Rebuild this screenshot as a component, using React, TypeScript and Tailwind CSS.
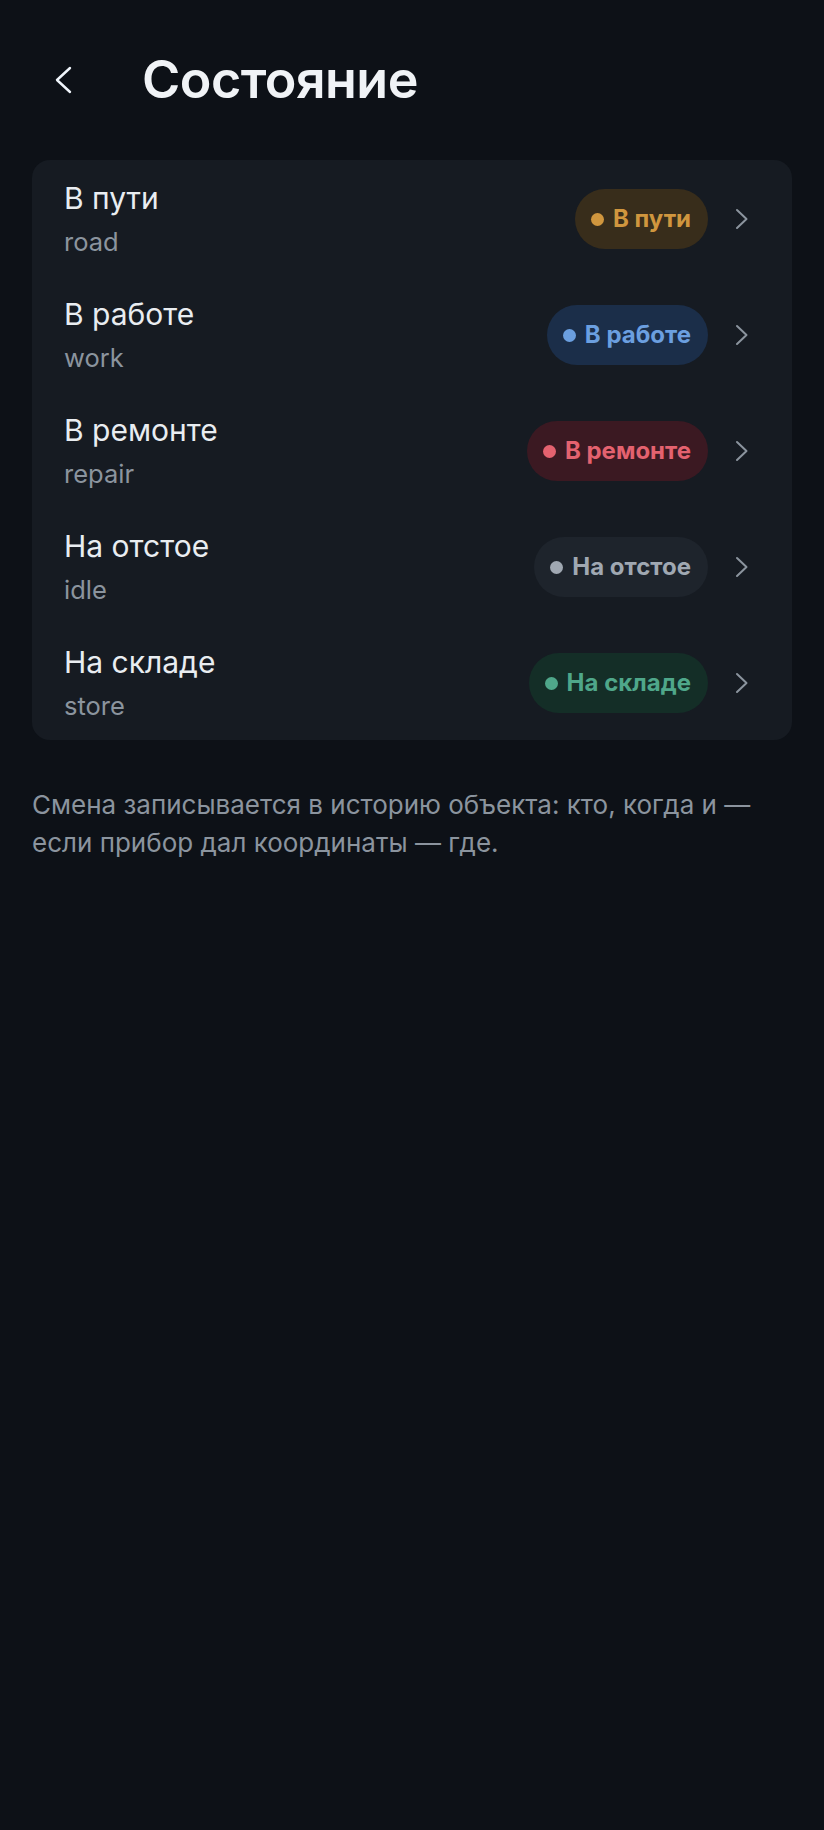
import React from 'react';

interface StatusItem {
  id: string;
  label: string;
  badge: string;
  dot: string;
  text: string;
}

const statuses: StatusItem[] = [
  { id: 'road', label: 'В пути', badge: 'bg-[#382d1b]', dot: 'bg-[#d0963e]', text: 'text-[#d0963e]' },
  { id: 'work', label: 'В работе', badge: 'bg-[#1b2e49]', dot: 'bg-[#6b9fe0]', text: 'text-[#6b9fe0]' },
  { id: 'repair', label: 'В ремонте', badge: 'bg-[#3b1922]', dot: 'bg-[#e4626f]', text: 'text-[#e4626f]' },
  { id: 'idle', label: 'На отстое', badge: 'bg-[#1e242c]', dot: 'bg-[#a0a8b2]', text: 'text-[#a0a8b2]' },
  { id: 'store', label: 'На складе', badge: 'bg-[#142e27]', dot: 'bg-[#4fa78a]', text: 'text-[#4fa78a]' },
];

const ChevronRight: React.FC = () => (
  <svg width="16" height="24" viewBox="0 0 16 24" fill="none" className="shrink-0">
    <polyline points="3,3 12.5,12 3,21" stroke="#8b949e" strokeWidth="2" strokeLinecap="round" strokeLinejoin="round" />
  </svg>
);

const App: React.FC = () => {
  return (
    <div className="min-h-[1830px] w-full bg-[#0d1117] font-['Inter','Noto_Sans',sans-serif]">
      {/* Header */}
      <div className="flex h-[160px] items-center pl-[36px]">
        <button className="flex h-14 w-14 items-center justify-center">
          <svg width="18" height="28" viewBox="0 0 18 28" fill="none">
            <polyline points="15,2 2,14 15,26" stroke="#f0f6fc" strokeWidth="2.4" strokeLinecap="round" strokeLinejoin="round" />
          </svg>
        </button>
        <h1 className="ml-[50px] text-[52px] font-semibold leading-none tracking-[-0.01em] text-[#f0f3f6]">Состояние</h1>
      </div>

      {/* Status list */}
      <div className="mx-8 overflow-hidden rounded-[18px] bg-[#161b22]">
        {statuses.map((s) => (
          <div key={s.id} className="flex items-center pl-8 pr-[42px] pt-[20px] pb-[18px]">
            <div className="flex min-w-0 flex-1 flex-col">
              <span className="text-[30px] leading-[36px] text-[#e9edf1]">{s.label}</span>
              <span className="mt-[10px] text-[25.5px] leading-[32px] text-[#8b949e]">{s.id}</span>
            </div>
            <div className={`flex items-center gap-[9px] rounded-full py-4 pl-4 pr-[17px] ${s.badge}`}>
              <span className={`h-[13px] w-[13px] rounded-full ${s.dot}`} />
              <span className={`text-[24px] font-bold leading-[28px] ${s.text}`}>{s.label}</span>
            </div>
            <div className="ml-[26px]">
              <ChevronRight />
            </div>
          </div>
        ))}
      </div>

      <p className="mx-8 mt-[46px] text-[26px] leading-[38px] text-[#8b949e]">
        Смена записывается в историю объекта: кто, когда и — если прибор дал координаты — где.
      </p>
    </div>
  );
};

export default App;
